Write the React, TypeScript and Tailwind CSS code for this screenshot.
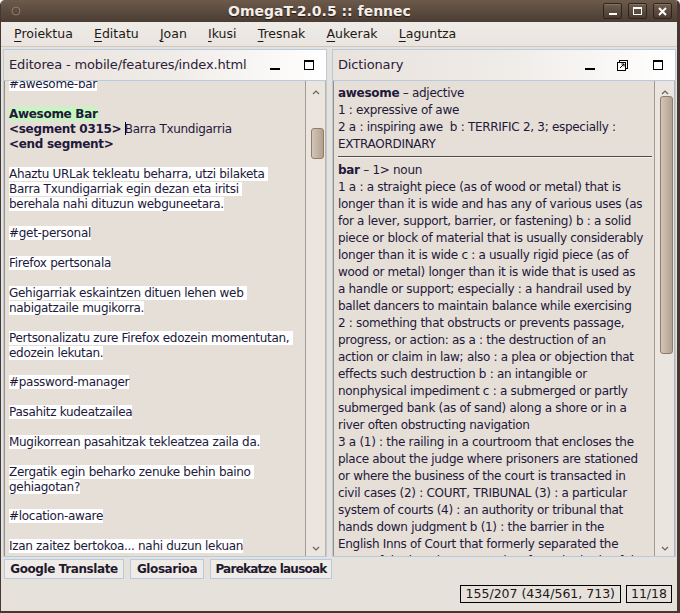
import React from 'react';

const txt = 'text-[#22183a]';

const leftRows: string[] = [
  '#awesome-bar',
  '',
  '@awesome',
  '@segment',
  '@end',
  '',
  'Ahaztu URLak tekleatu beharra, utzi bilaketa ',
  'Barra Txundigarriak egin dezan eta iritsi ',
  'berehala nahi dituzun webguneetara.',
  '',
  '#get-personal',
  '',
  'Firefox pertsonala',
  '',
  'Gehigarriak eskaintzen dituen lehen web ',
  'nabigatzaile mugikorra.',
  '',
  'Pertsonalizatu zure Firefox edozein momentutan, ',
  'edozein lekutan.',
  '',
  '#password-manager',
  '',
  'Pasahitz kudeatzailea',
  '',
  'Mugikorrean pasahitzak tekleatzea zaila da.',
  '',
  'Zergatik egin beharko zenuke behin baino ',
  'gehiagotan?',
  '',
  '#location-aware',
  '',
  'Izan zaitez bertokoa... nahi duzun lekuan',
];

const barLines = [
  '1 a : a straight piece (as of wood or metal) that is',
  'longer than it is wide and has any of various uses (as',
  'for a lever, support, barrier, or fastening) b : a solid',
  'piece or block of material that is usually considerably',
  'longer than it is wide c : a usually rigid piece (as of',
  'wood or metal) longer than it is wide that is used as',
  'a handle or support; especially : a handrail used by',
  'ballet dancers to maintain balance while exercising',
  '2 : something that obstructs or prevents passage,',
  'progress, or action: as a : the destruction of an',
  'action or claim in law; also : a plea or objection that',
  'effects such destruction b : an intangible or',
  'nonphysical impediment c : a submerged or partly',
  'submerged bank (as of sand) along a shore or in a',
  'river often obstructing navigation',
  '3 a (1) : the railing in a courtroom that encloses the',
  'place about the judge where prisoners are stationed',
  'or where the business of the court is transacted in',
  'civil cases (2) : COURT, TRIBUNAL (3) : a particular',
  'system of courts (4) : an authority or tribunal that',
  'hands down judgment b (1) : the barrier in the',
  'English Inns of Court that formerly separated the',
  'seats of the benchers or readers from the body of the',
];

const menus = ['Proiektua', 'Editatu', 'Joan', 'Ikusi', 'Tresnak', 'Aukerak', 'Laguntza'];

const tabs = [
  { label: 'Google Translate', cls: 'w-[120px] tracking-[-0.4px]' },
  { label: 'Glosarioa', cls: 'w-[74px] tracking-[-0.4px]' },
  { label: 'Parekatze lausoak', cls: 'w-[122px] tracking-[-0.75px]' },
];

const Chevron = ({ down }: { down?: boolean }) => (
  <svg width="8" height="5" viewBox="0 0 8 5" className={down ? 'rotate-180' : ''}>
    <path d="M1 4 L4 1 L7 4" fill="none" stroke="#6b6058" strokeWidth="1.2" />
  </svg>
);

const Scrollbar = ({ top, height }: { top: number; height: number }) => (
  <div className="w-[21px] h-full flex flex-col border-l border-[#a59a90] border-r border-r-[#bdb3a9] bg-[#ebe5df] pl-[5px] pr-[1px]">
    <div className="h-[14px] flex items-end justify-center pr-[4px]">
      <Chevron />
    </div>
    <div className="flex-1 relative">
      <div
        className="absolute left-0 right-0 rounded-[3px] border border-[#8f7c6b] bg-gradient-to-r from-[#d2c5b8] via-[#c3b3a3] to-[#b3a190]"
        style={{ top, height }}
      />
    </div>
    <div className="h-[16px] flex items-center justify-center pr-[4px]">
      <Chevron down />
    </div>
  </div>
);

const Minimize = () => <div className="w-[10px] h-[2px] bg-black mt-[8px]" />;
const Maximize = () => <div className="w-[10px] h-[10px] border border-black border-t-2" />;
const Undock = () => (
  <svg width="11" height="11" viewBox="0 0 11 11">
    <rect x="2.5" y="0.5" width="8" height="8" fill="none" stroke="#000" />
    <rect x="0.5" y="2.5" width="8" height="8" fill="#fff" stroke="#000" />
    <path d="M3 8 L7 4 M4.5 4 H7 V6.5" fill="none" stroke="#000" />
  </svg>
);

const Panel = ({
  title,
  width,
  icons,
  thumb,
  children,
}: {
  title: string;
  width: string;
  icons: React.ReactNode;
  thumb: { top: number; height: number };
  children: React.ReactNode;
}) => (
  <div className={`${width} h-[508px] flex flex-col border border-[#b6cbe0]`}>
    <div className="h-[31px] flex items-center border-b border-[#b6cbe0] bg-gradient-to-r from-[#e9e3dd] via-[#efebe7] to-white pl-[5px]">
      <span className="text-[13px] tracking-[-0.15px] text-[#2c2038]">{title}</span>
      <div className="ml-auto flex items-center">{icons}</div>
    </div>
    <div className="flex-1 min-h-0 flex border-l border-[#9a8f85] bg-[#e6dfd8]">
      <div className="flex-1 min-w-0 overflow-hidden">{children}</div>
      <Scrollbar top={thumb.top} height={thumb.height} />
    </div>
  </div>
);

const TitleButton = ({ children }: { children: React.ReactNode }) => (
  <div className="w-[19px] h-[16px] rounded-[2px] border border-[#2e241e] bg-gradient-to-b from-[#6e5d50] to-[#4a3b31] shadow-[inset_0_1px_0_#85735f] flex items-center justify-center">
    {children}
  </div>
);

export default function App() {
  return (
    <div className="w-[680px] h-[613px] overflow-hidden flex flex-col bg-[#e7e1db] border-l border-r-[3px] border-b-2 border-[#463830] rounded-t-[5px] font-['DejaVu_Sans',sans-serif]">
      {/* title bar */}
      <div className="h-[22px] shrink-0 flex items-center bg-gradient-to-b from-[#6c5a4b] to-[#4b3d33] relative">
        <svg width="10" height="10" viewBox="0 0 10 10" className="ml-[10px]">
          <circle cx="5" cy="5" r="4" fill="none" stroke="#8d7b6c" strokeWidth="1" />
        </svg>
        <span className="ml-[207px] text-[14px] font-bold text-[#f4eee8] [text-shadow:0_1px_1px_#221a15]">
          OmegaT-2.0.5 :: fennec
        </span>
        <div className="ml-auto mr-[5px] flex gap-[6px]">
          <TitleButton>
            <div className="w-[8px] h-[2px] bg-white mt-[6px]" />
          </TitleButton>
          <TitleButton>
            <div className="w-[9px] h-[8px] border border-white border-t-2" />
          </TitleButton>
          <TitleButton>
            <svg width="9" height="9" viewBox="0 0 9 9">
              <path d="M1 1 L8 8 M8 1 L1 8" stroke="#fff" strokeWidth="2" />
            </svg>
          </TitleButton>
        </div>
      </div>

      {/* menu bar */}
      <div className="h-[25px] shrink-0 flex items-center pl-[2.5px] bg-gradient-to-b from-[#efebe7] to-[#e9e4df] border-b border-[#cfc6bd] text-[12.5px] text-[#1e1915]">
        {menus.map((m) => (
          <span key={m} className="px-[10.6px] pt-[1px]">
            <span className="underline underline-offset-[3px] decoration-1">{m[0]}</span>
            {m.slice(1)}
          </span>
        ))}
      </div>

      {/* panes */}
      <div className="flex gap-[5px] pl-[2px] pt-[2px] shrink-0">
        <Panel
          title="Editorea - mobile/features/index.html"
          width="w-[324px]"
          thumb={{ top: 33, height: 31 }}
          icons={
            <>
              <div className="mr-[24px]">
                <Minimize />
              </div>
              <div className="mr-[12px]">
                <Maximize />
              </div>
            </>
          }
        >
          <div className={`pl-[4px] mt-[-3.7px] text-[12px] tracking-[-0.3px] leading-[14.9px] ${txt}`}>
            {leftRows.map((r, i) => {
              if (r === '') return <div key={i} className="h-[14.9px]" />;
              if (r === '@awesome')
                return (
                  <div key={i} className="whitespace-pre">
                    <span className="bg-[#c3f7bd] font-bold">Awesome Bar</span>
                  </div>
                );
              if (r === '@segment')
                return (
                  <div key={i} className="whitespace-pre">
                    <span className="font-bold">&lt;segment 0315&gt;</span>{' '}
                    <span className="inline-block w-px h-[13px] bg-black align-[-2px] mr-[-1px]" />
                    Barra Txundigarria
                  </div>
                );
              if (r === '@end')
                return (
                  <div key={i} className="whitespace-pre font-bold">
                    &lt;end segment&gt;
                  </div>
                );
              return (
                <div key={i} className="whitespace-pre">
                  <span className="bg-white">{r}</span>
                </div>
              );
            })}
          </div>
        </Panel>

        <Panel
          title="Dictionary"
          width="w-[344px]"
          thumb={{ top: 1, height: 258 }}
          icons={
            <>
              <div className="mr-[22px]">
                <Minimize />
              </div>
              <div className="mr-[25px]">
                <Undock />
              </div>
              <div className="mr-[12px]">
                <Maximize />
              </div>
            </>
          }
        >
          <div className={`pl-[4px] pt-[3.5px] text-[12px] tracking-[-0.3px] leading-[17px] whitespace-pre ${txt}`}>
            <div>
              <span className="font-bold">awesome</span> – adjective
            </div>
            <div>1 : expressive of awe</div>
            <div>2 a : inspiring awe&nbsp; b : TERRIFIC 2, 3; especially :</div>
            <div>EXTRAORDINARY</div>
            <div className="h-[9px] pt-[3px] pr-[2px]">
              <div className="h-px bg-[#4f4a46]" />
              <div className="h-px bg-[#f6f3f0]" />
            </div>
            <div>
              <span className="font-bold">bar</span> – 1&gt; noun
            </div>
            {barLines.map((l) => (
              <div key={l}>{l}</div>
            ))}
          </div>
        </Panel>
      </div>

      {/* tabs */}
      <div className="flex gap-[6px] pl-[3px] pt-[2px] shrink-0 text-[12px] font-bold text-[#1f1a2e]">
        {tabs.map((t) => (
          <div
            key={t.label}
            className={`${t.cls} h-[20px] flex items-center justify-center whitespace-nowrap border border-[#b6cbe0] bg-[#efebe7]`}
          >
            {t.label}
          </div>
        ))}
      </div>

      {/* status */}
      <div className="flex justify-end gap-[5px] pr-[5px] mt-[6px] shrink-0 text-[12.5px] text-[#1c1816]">
        <div className="h-[18px] px-[5px] flex items-center border border-black">155/207 (434/561, 713)</div>
        <div className="h-[18px] px-[4px] flex items-center border border-black">11/18</div>
      </div>
    </div>
  );
}
